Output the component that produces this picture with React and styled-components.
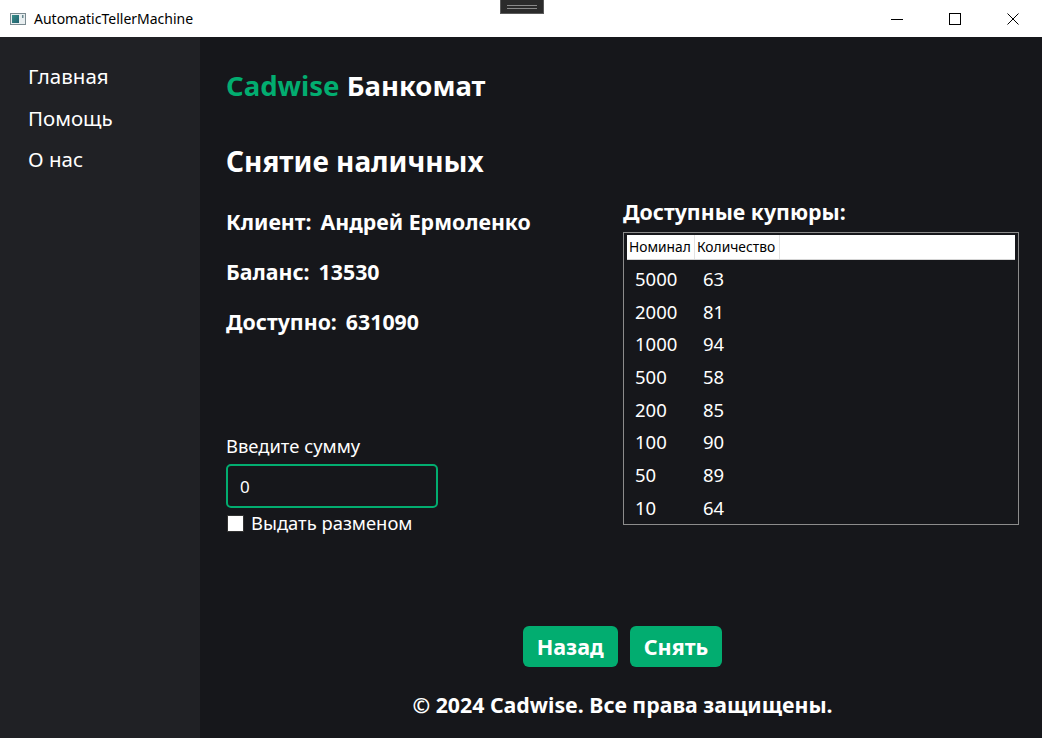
import React from 'react';
import styled, { createGlobalStyle } from 'styled-components';

const GlobalStyle = createGlobalStyle`
  html, body {
    margin: 0;
    padding: 0;
    width: 1042px;
    height: 738px;
    overflow: hidden;
    font-family: 'Noto Sans', 'Open Sans', sans-serif;
  }
  * {
    box-sizing: border-box;
  }
`;

const NOTES = [
  { id: 1, value: 5000, count: 63 },
  { id: 2, value: 2000, count: 81 },
  { id: 3, value: 1000, count: 94 },
  { id: 4, value: 500, count: 58 },
  { id: 5, value: 200, count: 85 },
  { id: 6, value: 100, count: 90 },
  { id: 7, value: 50, count: 89 },
  { id: 8, value: 10, count: 64 },
];

const MENU = [
  { id: 1, name: 'Главная' },
  { id: 2, name: 'Помощь' },
  { id: 3, name: 'О нас' },
];

const AppIcon = () => (
  <svg width="16" height="16" viewBox="0 0 16 16">
    <defs>
      <linearGradient id="ig" x1="0" y1="0" x2="1" y2="1">
        <stop offset="0" stopColor="#3a8f8a" />
        <stop offset="1" stopColor="#1f5f6e" />
      </linearGradient>
    </defs>
    <rect x="0.5" y="2.5" width="15" height="11" fill="#e8eef0" stroke="#7a8a90" />
    <rect x="2" y="4" width="7" height="8" fill="url(#ig)" />
    <rect x="12" y="4" width="1.5" height="3" fill="#6a8a90" />
  </svg>
);

const App = () => {
  return (
    <>
      <GlobalStyle />
      <Window>
        <TitleBar>
          <TitleIcon>
            <AppIcon />
          </TitleIcon>
          <TitleText>AutomaticTellerMachine</TitleText>
          <DebugGrip>
            <GripLine />
            <GripLine />
          </DebugGrip>
          <Controls>
            <ControlBtn>
              <svg width="12" height="12" viewBox="0 0 12 12">
                <line x1="0" y1="6.5" x2="12" y2="6.5" stroke="#000" strokeWidth="1" />
              </svg>
            </ControlBtn>
            <ControlBtn>
              <svg width="12" height="12" viewBox="0 0 12 12">
                <rect x="0.5" y="0.5" width="11" height="11" fill="none" stroke="#000" strokeWidth="1" />
              </svg>
            </ControlBtn>
            <ControlBtn>
              <svg width="12" height="12" viewBox="0 0 12 12">
                <path d="M0.5 0.5 L11.5 11.5 M11.5 0.5 L0.5 11.5" stroke="#000" strokeWidth="1" />
              </svg>
            </ControlBtn>
          </Controls>
        </TitleBar>
        <Body>
          <Sidebar>
            {MENU.map(item => (
              <MenuItem key={item.id}>{item.name}</MenuItem>
            ))}
          </Sidebar>
          <Main>
            <Brand>
              <Green>Cadwise</Green> Банкомат
            </Brand>
            <PageTitle>Снятие наличных</PageTitle>
            <Columns>
              <LeftCol>
                <InfoLine>
                  <span>Клиент:</span>
                  <span>Андрей Ермоленко</span>
                </InfoLine>
                <InfoLine>
                  <span>Баланс:</span>
                  <span>13530</span>
                </InfoLine>
                <InfoLine>
                  <span>Доступно:</span>
                  <span>631090</span>
                </InfoLine>
                <SumLabel>Введите сумму</SumLabel>
                <SumInput defaultValue="0" />
                <CheckRow>
                  <CheckBox />
                  <span>Выдать разменом</span>
                </CheckRow>
              </LeftCol>
              <RightCol>
                <NotesTitle>Доступные купюры:</NotesTitle>
                <NotesBox>
                  <HeaderRow>
                    <HeadCell $w={68}>Номинал</HeadCell>
                    <HeadCell $w={85}>Количество</HeadCell>
                    <HeadFill />
                  </HeaderRow>
                  {NOTES.map(note => (
                    <NoteRow key={note.id}>
                      <NoteCell $w={68}>{note.value}</NoteCell>
                      <NoteCell $w={85}>{note.count}</NoteCell>
                    </NoteRow>
                  ))}
                </NotesBox>
              </RightCol>
            </Columns>
            <Buttons>
              <GreenBtn>Назад</GreenBtn>
              <GreenBtn>Снять</GreenBtn>
            </Buttons>
            <Footer>© 2024 Cadwise. Все права защищены.</Footer>
          </Main>
        </Body>
      </Window>
    </>
  );
};

export default App;

const Window = styled.div`
  width: 1042px;
  height: 738px;
  display: flex;
  flex-direction: column;
`;

const TitleBar = styled.div`
  position: relative;
  height: 37px;
  background-color: #ffffff;
  display: flex;
  align-items: center;
`;

const TitleIcon = styled.div`
  width: 16px;
  height: 16px;
  margin-left: 10px;
  margin-top: 1px;
  display: flex;
`;

const TitleText = styled.span`
  margin-left: 8px;
  font-size: 14px;
  color: #000;
  margin-top: -1px;
`;

const DebugGrip = styled.div`
  position: absolute;
  left: 500px;
  top: 0;
  width: 44px;
  height: 14px;
  background-color: #2b2b2b;
  border: 1px solid #5a5a5a;
  border-top: none;
  display: flex;
  flex-direction: column;
  align-items: center;
  justify-content: center;
  gap: 2px;
`;

const GripLine = styled.div`
  width: 30px;
  height: 1px;
  background-color: #8a8a8a;
`;

const Controls = styled.div`
  margin-left: auto;
  display: flex;
  height: 100%;
`;

const ControlBtn = styled.div`
  width: 58px;
  height: 100%;
  display: flex;
  align-items: center;
  justify-content: center;
`;

const Body = styled.div`
  flex: 1;
  display: flex;
`;

const Sidebar = styled.div`
  width: 200px;
  background-color: #202125;
  padding: 25px 0 0 28px;
  display: flex;
  flex-direction: column;
  gap: 13.5px;
`;

const MenuItem = styled.div`
  font-size: 20.5px;
  line-height: 28px;
  color: #ffffff;
`;

const Main = styled.div`
  flex: 1;
  background-color: #16171b;
  padding: 0 23px 0 26px;
  display: flex;
  flex-direction: column;
  color: #ffffff;
`;

const Brand = styled.div`
  margin-top: 32px;
  font-size: 27.5px;
  line-height: 34px;
  font-weight: 700;
  white-space: nowrap;
`;

const Green = styled.span`
  color: #02ad70;
`;

const PageTitle = styled.div`
  margin-top: 41px;
  font-size: 28px;
  line-height: 34px;
  font-weight: 700;
  white-space: nowrap;
`;

const Columns = styled.div`
  display: flex;
  margin-top: 20px;
`;

const LeftCol = styled.div`
  width: 397px;
  display: flex;
  flex-direction: column;
  padding-top: 11px;
`;

const InfoLine = styled.div`
  display: flex;
  gap: 9px;
  font-size: 21.3px;
  line-height: 26px;
  font-weight: 700;
  margin-bottom: 24px;
  white-space: nowrap;
`;

const SumLabel = styled.div`
  margin-top: 75px;
  font-size: 18.4px;
  line-height: 24px;
`;

const SumInput = styled.input`
  margin-top: 6px;
  width: 212px;
  height: 44px;
  background-color: #16171b;
  border: 2px solid #02ad70;
  border-radius: 5px;
  padding: 0 12px;
  color: #ffffff;
  font-family: inherit;
  font-size: 17px;
  outline: none;
`;

const CheckRow = styled.label`
  display: flex;
  align-items: center;
  gap: 7px;
  margin-top: 5px;
  margin-left: 1px;
  font-size: 18.4px;
  line-height: 20px;
`;

const CheckBox = styled.span`
  width: 17px;
  height: 17px;
  background-color: #ffffff;
  border: 1px solid #333;
`;

const RightCol = styled.div`
  flex: 1;
  display: flex;
  flex-direction: column;
`;

const NotesTitle = styled.div`
  font-size: 21.3px;
  line-height: 28px;
  font-weight: 700;
  white-space: nowrap;
`;

const NotesBox = styled.div`
  margin-top: 6px;
  height: 293px;
  border: 1px solid #8c8c8c;
  padding: 2px 3px;
  display: flex;
  flex-direction: column;
  overflow: hidden;
`;

const HeaderRow = styled.div`
  flex-shrink: 0;
  height: 25px;
  display: flex;
  background-color: #ffffff;
  border-bottom: 1px solid #d5d5d5;
  margin-bottom: 2px;
`;

const HeadCell = styled.div`
  width: ${p => p.$w}px;
  padding-left: 2px;
  border-right: 1px solid #e3e3e3;
  font-size: 13.8px;
  line-height: 24px;
  color: #000;
  white-space: nowrap;
  overflow: hidden;
`;

const HeadFill = styled.div`
  flex: 1;
`;

const NoteRow = styled.div`
  flex-shrink: 0;
  height: 32.7px;
  display: flex;
  align-items: center;
`;

const NoteCell = styled.div`
  width: ${p => p.$w}px;
  padding-left: 8px;
  font-size: 18.5px;
  color: #ffffff;
`;

const Buttons = styled.div`
  margin-top: 93px;
  display: flex;
  justify-content: center;
  gap: 12px;
`;

const GreenBtn = styled.button`
  height: 41px;
  padding: 0 14px;
  background-color: #02ad70;
  border: none;
  border-radius: 6px;
  color: #ffffff;
  font-family: inherit;
  font-size: 21.5px;
  font-weight: 700;
`;

const Footer = styled.div`
  margin-top: 23px;
  text-align: center;
  font-size: 21.3px;
  line-height: 30px;
  font-weight: 700;
  white-space: nowrap;
`;
